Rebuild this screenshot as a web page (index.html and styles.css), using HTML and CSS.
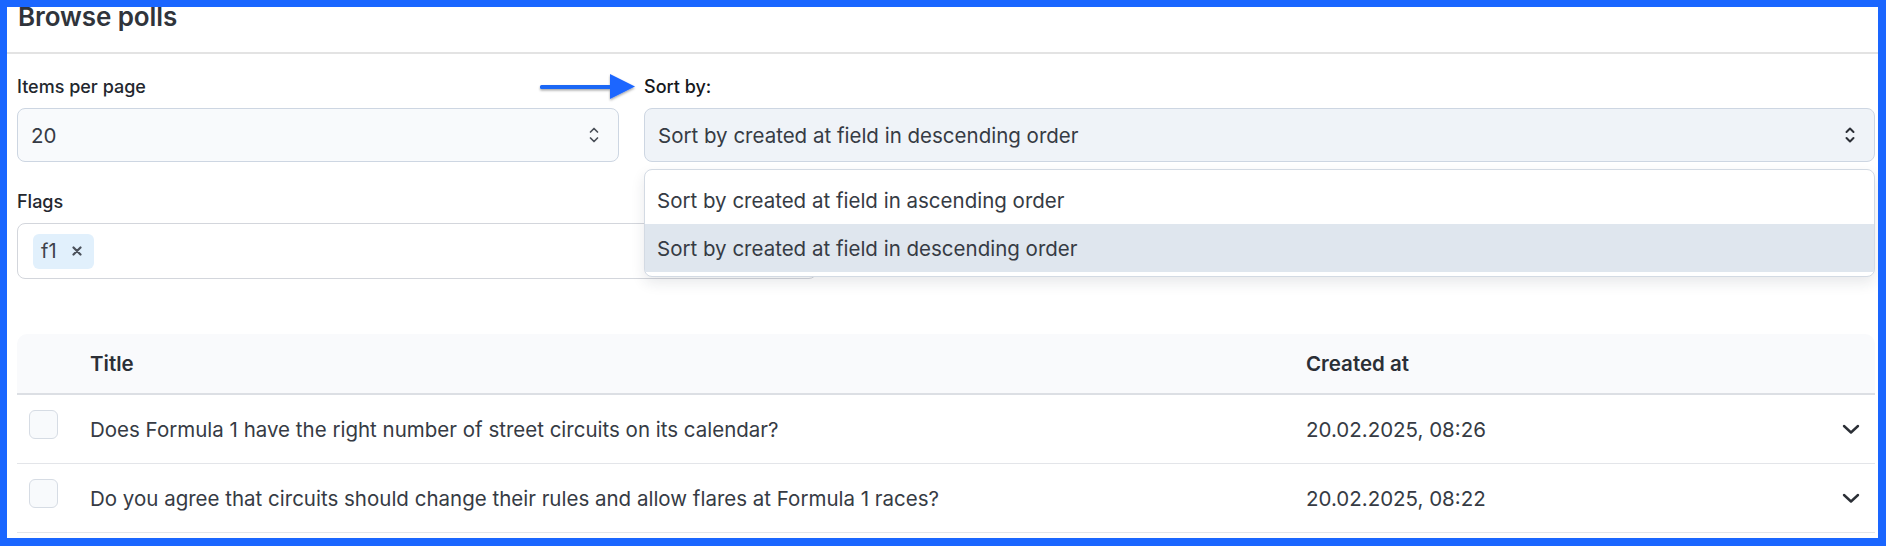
FILE: index.html
```html
<!DOCTYPE html>
<html lang="en">
<head>
<meta charset="utf-8">
<title>Browse polls</title>
<link rel="stylesheet" href="styles.css">
</head>
<body>
<div class="frame">
  <header class="page-header">
    <h1 class="page-title">Browse polls</h1>
  </header>
  <main class="content">
    <div class="filters">
      <div class="field">
        <label class="field-label">Items per page</label>
        <div class="select">
          <span class="select-value">20</span>
          <svg class="updown" width="12" height="22" viewBox="0 0 12 22"><path d="M2.5 8 L6 4.5 L9.5 8 M2.5 14 L6 17.5 L9.5 14" fill="none" stroke="#4a4f58" stroke-width="1.7" stroke-linecap="round" stroke-linejoin="round"/></svg>
        </div>
      </div>
      <div class="field field-sort">
        <label class="field-label label-strong">Sort by:</label>
        <div class="select select-active">
          <span class="select-value">Sort by created at field in descending order</span>
          <svg class="updown" width="12" height="22" viewBox="0 0 12 22"><path d="M2.5 8 L6 4.5 L9.5 8 M2.5 14 L6 17.5 L9.5 14" fill="none" stroke="#2b2f36" stroke-width="2" stroke-linecap="round" stroke-linejoin="round"/></svg>
        </div>
        <ul class="dropdown">
          <li class="option">Sort by created at field in ascending order</li>
          <li class="option option-active">Sort by created at field in descending order</li>
        </ul>
      </div>
      <div class="field field-flags">
        <label class="field-label">Flags</label>
        <div class="tags-input">
          <span class="chip">f1 <svg class="chip-x" width="10" height="10" viewBox="0 0 10 10"><path d="M1.5 1.5 L8.5 8.5 M8.5 1.5 L1.5 8.5" stroke="#4a505a" stroke-width="2.2" stroke-linecap="round"/></svg></span>
        </div>
      </div>
    </div>

    <div class="table">
      <div class="row head">
        <div class="cell"></div>
        <div class="cell">Title</div>
        <div class="cell">Created at</div>
        <div class="cell"></div>
      </div>
      <div class="row">
        <div class="cell cell-check"><span class="checkbox"></span></div>
        <div class="cell">Does Formula 1 have the right number of street circuits on its calendar?</div>
        <div class="cell">20.02.2025, 08:26</div>
        <div class="cell cell-chev"><svg width="18" height="11" viewBox="0 0 18 11"><path d="M2 2 L9 8.5 L16 2" fill="none" stroke="#2b2f36" stroke-width="2.4" stroke-linecap="round" stroke-linejoin="round"/></svg></div>
      </div>
      <div class="row">
        <div class="cell cell-check"><span class="checkbox"></span></div>
        <div class="cell">Do you agree that circuits should change their rules and allow flares at Formula 1 races?</div>
        <div class="cell">20.02.2025, 08:22</div>
        <div class="cell cell-chev"><svg width="18" height="11" viewBox="0 0 18 11"><path d="M2 2 L9 8.5 L16 2" fill="none" stroke="#2b2f36" stroke-width="2.4" stroke-linecap="round" stroke-linejoin="round"/></svg></div>
      </div>
    </div>
  </main>

  <svg class="annot-arrow" width="104" height="34" viewBox="0 0 104 34">
    <defs>
      <filter id="sh" x="-10%" y="-30%" width="130%" height="170%">
        <feDropShadow dx="0" dy="1.5" stdDeviation="1.2" flood-color="#000" flood-opacity="0.35"/>
      </filter>
    </defs>
    <g filter="url(#sh)">
      <rect x="2" y="14" width="74" height="4" rx="1.5" fill="#1f68f5"/>
      <polygon points="72,3 97,15.5 72,28" fill="#1a66ff"/>
    </g>
  </svg>
</div>
</body>
</html>
```

FILE: styles.css
```css
* { box-sizing: border-box; }
html, body { margin: 0; padding: 0; background: #fff; }
body {
  font-family: Inter, "Noto Sans", "Liberation Sans", sans-serif;
  color: #363b44;
}
.frame {
  position: relative;
  width: 1886px;
  height: 546px;
  border-style: solid;
  border-color: #1a66ff;
  border-width: 7px 8px 8px 7px;
  background: #fff;
  overflow: hidden;
}
.page-header {
  display: flex;
  align-items: flex-start;
  height: 47px;
  border-bottom: 2px solid #e3e3e3;
  padding: 0 11px;
}
.page-title {
  margin: -6px 0 0;
  font-size: 26px;
  line-height: 32px;
  font-weight: 600;
  color: #30343b;
  letter-spacing: -0.1px;
}
.content {
  padding: 21px 3px 0 10px;
}
.filters {
  display: grid;
  grid-template-columns: 602px 1fr;
  column-gap: 25px;
  row-gap: 28px;
}
.field { position: relative; }
.field-flags { grid-column: 1 / 3; width: 800px; }
.field-label {
  display: block;
  font-size: 18px;
  line-height: 24px;
  font-weight: 500;
  color: #23272e;
  margin-bottom: 9px;
}
.label-strong { color: #15181c; }
.select {
  height: 54px;
  border: 1px solid #cdd6e2;
  border-radius: 8px;
  background: #f8fafc;
  display: flex;
  align-items: center;
  justify-content: space-between;
  padding: 0 18px 0 13px;
  font-size: 20.5px;
  color: #363b44;
}
.select-active { background: #eff3f8; }
.dropdown {
  position: absolute;
  left: 0;
  right: 0;
  top: 94px;
  margin: 0;
  padding: 6px 0 4px;
  list-style: none;
  background: #fff;
  border: 1px solid #d3dae3;
  border-radius: 8px;
  box-shadow: 0 6px 14px rgba(30, 40, 60, 0.10);
  z-index: 5;
}
.option {
  height: 48px;
  display: flex;
  align-items: center;
  padding-left: 12px;
  font-size: 20.5px;
  color: #363b44;
}
.option-active { background: #dfe6ee; }
.tags-input {
  height: 56px;
  border: 1px solid #d3d6dc;
  border-radius: 8px;
  background: #fff;
  display: flex;
  align-items: center;
  padding: 0 15px;
}
.chip {
  display: inline-flex;
  align-items: center;
  gap: 15px;
  height: 35px;
  padding: 0 12px 0 8px;
  background: #e1f0fc;
  border-radius: 6px;
  font-size: 20px;
  color: #3d424a;
}
.table {
  margin-top: 55px;
}
.row {
  display: grid;
  grid-template-columns: 73px 1216px 1fr 48px;
  height: 69px;
  border-bottom: 1px solid #e3e5e9;
  font-size: 20.5px;
  color: #363b44;
}
.row.head {
  height: 61px;
  background: #f9fafc;
  border-bottom: 2px solid #dcdfe4;
  border-radius: 10px 10px 0 0;
  font-weight: 600;
  color: #2b2f36;
}
.cell {
  display: flex;
  align-items: center;
}
.cell-check { align-items: flex-start; padding: 15px 0 0 12px; }
.checkbox {
  width: 29px;
  height: 29px;
  border: 1px solid #d6dce4;
  border-radius: 6px;
  background: #f8fafc;
}
.cell-chev { justify-content: center; }
.annot-arrow {
  position: absolute;
  left: 531px;
  top: 64px;
  z-index: 10;
}
```
